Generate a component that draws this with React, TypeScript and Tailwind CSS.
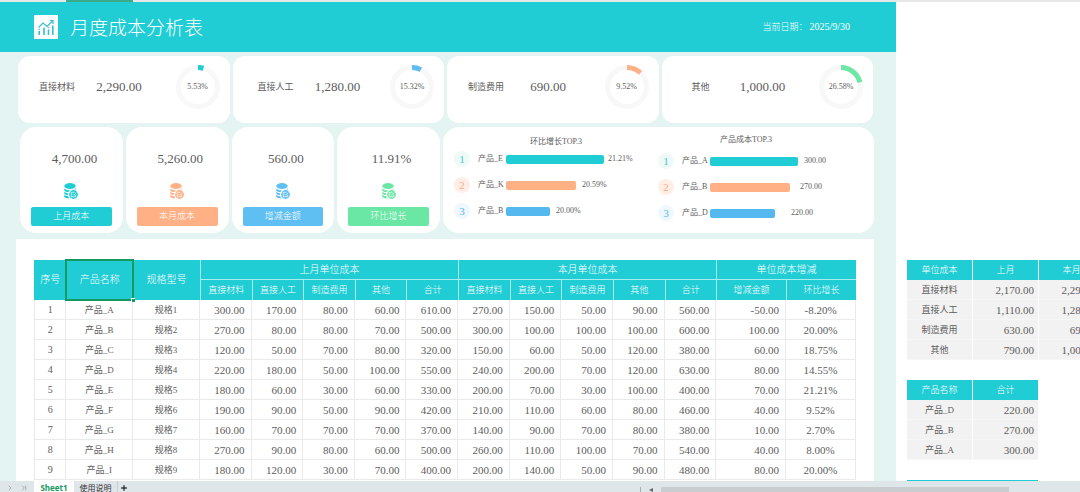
import type { ReactNode } from "react";
import { ChevronRight, ChevronLast, Plus } from "lucide-react";
import clsx from "clsx";

const shares = [
  { label: "直接材料", value: "2,290.00", percent: 5.53, stroke: "#20cdd5", pad: "" },
  { label: "直接人工", value: "1,280.00", percent: 15.32, stroke: "#5fbcf2", pad: "pl-1" },
  { label: "制造费用", value: "690.00", percent: 9.52, stroke: "#ffb085", pad: "" },
  { label: "其他", value: "1,000.00", percent: 26.58, stroke: "#6ee6a5", pad: "" },
];

// arc lengths of the gauges, as a share of the full ring
const arcs = [0.045, 0.075, 0.12, 0.21];

const totals = [
  { label: "上月成本", value: "4,700.00", text: "text-[#20cdd5]", bg: "bg-[#20cdd5]" },
  { label: "本月成本", value: "5,260.00", text: "text-[#ffb085]", bg: "bg-[#ffb085]" },
  { label: "增减金额", value: "560.00", text: "text-[#5fbff2]", bg: "bg-[#5fbff2]" },
  { label: "环比增长", value: "11.91%", text: "text-[#6ae6a5]", bg: "bg-[#6ae6a5]" },
];

type Bar = { name: string; value: string; size: string };

const growthTop: Bar[] = [
  { name: "产品_E", value: "21.21%", size: "w-[98px] mr-1" },
  { name: "产品_K", value: "20.59%", size: "w-[70px] mr-1.5" },
  { name: "产品_B", value: "20.00%", size: "w-[44px] mr-1.5" },
];

const costTop: Bar[] = [
  { name: "产品_A", value: "300.00", size: "w-[88px] mr-1.5" },
  { name: "产品_B", value: "270.00", size: "w-[80px] mr-2.5" },
  { name: "产品_D", value: "220.00", size: "w-[65px] mr-4" },
];

const rankStyles = [
  { badge: "bg-[#eef9f8] text-[#3ccfc4]", bar: "bg-[#20cdd5]" },
  { badge: "bg-[#ffeee6] text-[#ffa985]", bar: "bg-[#ffb085]" },
  { badge: "bg-[#eef8fe] text-[#5fb4f0]", bar: "bg-[#55b9f0]" },
];

const costHeads = ["直接材料", "直接人工", "制造费用", "其他", "合计"];

const products = [
  ["A", 300, 170, 80, 60, 610, 270, 150, 50, 90, 560, -50, "-8.20%"],
  ["B", 270, 80, 80, 70, 500, 300, 100, 100, 100, 600, 100, "20.00%"],
  ["C", 120, 50, 70, 80, 320, 150, 60, 50, 120, 380, 60, "18.75%"],
  ["D", 220, 180, 50, 100, 550, 240, 200, 70, 120, 630, 80, "14.55%"],
  ["E", 180, 60, 30, 60, 330, 200, 70, 30, 100, 400, 70, "21.21%"],
  ["F", 190, 90, 50, 90, 420, 210, 110, 60, 80, 460, 40, "9.52%"],
  ["G", 160, 70, 70, 70, 370, 140, 90, 70, 80, 380, 10, "2.70%"],
  ["H", 270, 90, 80, 60, 500, 260, 110, 100, 70, 540, 40, "8.00%"],
  ["I", 180, 120, 30, 70, 400, 200, 140, 50, 90, 480, 80, "20.00%"],
];

function CoinsIcon() {
  return (
    <svg viewBox="0 0 28 32" className="h-4 w-3.5" fill="currentColor" aria-hidden="true">
      <ellipse cx="12" cy="6" rx="11.5" ry="6" />
      <path d="M.5 11c2.500 2.600 6 3.500 11.500 3.500l-3 3.500C5 18 2 17 .5 15z" />
      <path d="M.5 17.500c2 1.700 4.500 2.300 7.500 2.500l-.5 4C4.500 24 2 23 .5 21z" />
      <path d="M.5 23.500c2 1.700 4.500 2.300 7.500 2.500 .5 2 1.500 3.500 3 5C6 31 2 29.500 .5 27.500z" />
      <path d="M23.500 10.500v3c-2.500-1.200-5-1.300-8-.3 3.500-.2 6-1 8-2.700z" />
      <circle cx="19" cy="23" r="8.800" />
      <path d="M21 18.500h-6.500v9h9v-4M17.500 22.500l2 2 5-5.500" fill="none" stroke="#fff" strokeWidth="1.400" />
    </svg>
  );
}

function ReportIcon() {
  return (
    <svg viewBox="0 0 24 24" className="size-6 bg-white" fill="none" stroke="#35bfd0" strokeWidth="1.200" aria-hidden="true">
      <path d="M4.500 12.500 9 8l4 3.500L18.500 6M16 5.500h3V9" />
      <path d="M5.200 20v-4M5.200 14.800v-1M10 20v-7.500M14.500 20v-5.500M14.500 13.300v-1M18.800 20v-9.500" strokeWidth="1.600" />
    </svg>
  );
}

function Gauge({ percent, arc, stroke }: { percent: number; arc: number; stroke: string }) {
  const r = 19.5;
  const length = 2 * Math.PI * r;
  return (
    <div className="mr-2.5 ml-auto grid size-11 place-items-center">
      <svg viewBox="0 0 44 44" className="col-start-1 row-start-1 size-11" fill="none" strokeWidth="5" aria-hidden="true">
        <circle cx="22" cy="22" r={r} stroke="#f8f8f9" />
        <circle cx="22" cy="22" r={r} stroke={stroke} strokeDasharray={`${length * arc} ${length}`} transform="rotate(-90 22 22)" />
      </svg>
      <span className="col-start-1 row-start-1 text-[8px] leading-3">{percent}%</span>
    </div>
  );
}

function TopChart({ title, bars, className, titleClass }: { title: string; bars: Bar[]; className: string; titleClass: string }) {
  return (
    <section className={className}>
      <h2 className={clsx("text-center text-[8px] leading-[10px]", titleClass)}>{title}</h2>
      <ol className="flex flex-col gap-1.5">
        {bars.map((bar, i) => (
          <li key={bar.name} className="flex h-5 items-center text-[8px] leading-3">
            <span className={clsx("mr-2 size-4 rounded-full text-center text-[11px] leading-4", rankStyles[i].badge)}>{i + 1}</span>
            <span className="w-7">{bar.name}</span>
            <span className={clsx("h-[9px] rounded-xs", bar.size, rankStyles[i].bar)} />
            <span>{bar.value}</span>
          </li>
        ))}
      </ol>
    </section>
  );
}

function Head({ children, className, ...span }: { children: ReactNode; className?: string; colSpan?: number; rowSpan?: number }) {
  return (
    <th {...span} className={clsx("h-5 bg-[#20cdd5] p-0 font-light text-white", className)}>
      {children}
    </th>
  );
}

function CostTable() {
  const line = "border-r border-b border-[#eaeaea]";
  const headLine = "border-l border-[#a9ecee]";
  return (
    <table className="w-full table-fixed border-separate border-spacing-0 text-center text-[9px] leading-3">
      <colgroup>
        <col className="w-8" />
        <col className="w-[66px]" />
        <col className="w-[66px]" />
        <col span={10} className="w-[51px]" />
        <col span={2} className="w-[69px]" />
      </colgroup>
      <thead>
        <tr className="text-[10px]">
          <Head rowSpan={2}>序号</Head>
          <Head rowSpan={2} className="relative">
            产品名称
            <span className="absolute -inset-px border-2 border-[#129a60]" />
            <span className="absolute -right-0.5 -bottom-0.5 size-1 border-t border-l border-white bg-[#129a60]" />
          </Head>
          <Head rowSpan={2}>规格型号</Head>
          <Head colSpan={5} className={clsx(headLine, "border-b")}>上月单位成本</Head>
          <Head colSpan={5} className={clsx(headLine, "border-b")}>本月单位成本</Head>
          <Head colSpan={2} className={clsx(headLine, "border-b")}>单位成本增减</Head>
        </tr>
        <tr>
          {[...costHeads, ...costHeads, "增减金额", "环比增长"].map((head, i) => (
            <Head key={i} className={headLine}>{head}</Head>
          ))}
        </tr>
      </thead>
      <tbody>
        {products.map(([id, ...cells], row) => (
          <tr key={id}>
            <td className={clsx("h-5 border-l p-0 text-[10px]", line)}>{row + 1}</td>
            <td className={clsx("p-0", line)}>产品_{id}</td>
            <td className={clsx("p-0", line)}>规格{row + 1}</td>
            {cells.map((cell, i) => (
              <td key={i} className={clsx("p-0 text-[11px]", line, typeof cell === "number" && "pr-1.5 text-right")}>
                {typeof cell === "number" ? cell.toFixed(2) : cell}
              </td>
            ))}
          </tr>
        ))}
      </tbody>
    </table>
  );
}

function SideTable({ heads, rows }: { heads: string[]; rows: string[][] }) {
  const cell = "border-r border-b border-r-white border-b-[#f6f6f6] bg-[#f2f2f2] p-0";
  return (
    <table className="w-max border-separate border-spacing-0 text-center text-[9px] leading-3">
      <thead>
        <tr>
          {heads.map((head) => (
            <Head key={head} className="min-w-[66px] border-r border-white">{head}</Head>
          ))}
        </tr>
      </thead>
      <tbody>
        {rows.map(([name, ...values]) => (
          <tr key={name}>
            <td className={clsx("h-5", cell)}>{name}</td>
            {values.map((value, i) => (
              <td key={i} className={clsx("text-[11px]", cell)}>
                <span className="block pr-1 text-right">{value}</span>
              </td>
            ))}
          </tr>
        ))}
      </tbody>
    </table>
  );
}

export default function App() {
  return (
    <div className="flex h-screen flex-col overflow-hidden bg-white font-['Liberation_Serif','Noto_Sans_CJK_SC',serif] text-[#5c5c5c]">
      <div className="flex h-0.5 shrink-0 bg-[#e6e8e8]">
        <span className="ml-[66px] w-[67px] bg-[#3aac8c]" />
      </div>

      <main className="grid min-h-0 flex-1 grid-cols-[896fr_184fr] overflow-hidden">
        <div className="min-w-0 bg-[#e4f4f2]">
          <header className="flex h-[50px] items-center bg-[#20cdd5] pr-[46px] pl-[34px] font-light text-white">
            <ReportIcon />
            <h1 className="ml-3 pt-1 text-[19px] leading-6">月度成本分析表</h1>
            <p className="ml-auto text-[9px] leading-3">
              当前日期：<time className="ml-0.5 text-[10px]">2025/9/30</time>
            </p>
          </header>

          <div className="grid grid-cols-4 gap-[3px] pt-1 pr-[23px] pl-[18px]">
            {shares.map((share, i) => (
              <section key={share.label} className={clsx("flex h-[67px] items-center rounded-xl bg-white pb-1.5", share.pad)}>
                <h2 className="w-[78px] text-center text-[9px] leading-3">{share.label}</h2>
                <p className="w-[46px] text-center text-[13px] leading-4">{share.value}</p>
                <Gauge percent={share.percent} arc={arcs[i]} stroke={share.stroke} />
              </section>
            ))}
          </div>

          <div className="grid grid-cols-[420fr_431fr] gap-[3px] pt-1 pr-[22px] pl-5">
            <div className="grid grid-cols-4 gap-[3px]">
              {totals.map((total) => (
                <section key={total.label} className="flex h-[106px] flex-col items-center rounded-2xl bg-white px-[11px] pt-6">
                  <p className="pl-1.5 text-[13px] leading-4">{total.value}</p>
                  <div className={clsx("mt-4", total.text)}>
                    <CoinsIcon />
                  </div>
                  <h2 className={clsx("mt-2 w-full rounded-xs text-center text-[9px] leading-[19px] font-light text-white", total.bg)}>{total.label}</h2>
                </section>
              ))}
            </div>
            <div className="flex rounded-2xl bg-white pl-[11px]">
              <TopChart title="环比增长TOP.3" bars={growthTop} className="flex-[204] pt-2.5" titleClass="mb-0.5" />
              <TopChart title="产品成本TOP.3" bars={costTop} className="flex-[216] pt-2" titleClass="mb-1.5 pr-10" />
            </div>
          </div>

          <div className="mt-1.5 mr-[22px] ml-4 min-h-full bg-white px-[18px] pt-[21px]">
            <CostTable />
          </div>
        </div>

        <aside className="flex min-w-0 flex-col items-start gap-5 overflow-hidden pt-[258px] pl-[11px]">
          <SideTable
            heads={["单位成本", "上月", "本月"]}
            rows={[
              ["直接材料", "2,170.00", "2,290.00"],
              ["直接人工", "1,110.00", "1,280.00"],
              ["制造费用", "630.00", "690.00"],
              ["其他", "790.00", "1,000.00"],
            ]}
          />
          <SideTable
            heads={["产品名称", "合计"]}
            rows={[
              ["产品_D", "220.00"],
              ["产品_B", "270.00"],
              ["产品_A", "300.00"],
            ]}
          />
          <div className="h-5 w-[131px] shrink-0 bg-[#20cdd5]" />
        </aside>
      </main>

      <footer className="flex h-[11px] shrink-0 items-end bg-[#dfe6ea] font-['Open_Sans','Noto_Sans_CJK_SC',sans-serif] text-[8px] leading-[9px] font-normal text-[#333]">
        <ChevronRight className="ml-1.5 size-2 shrink-0 text-[#8a9499]" />
        <ChevronLast className="ml-1.5 size-2 shrink-0 text-[#8a9499]" />
        <button className="ml-1.5 w-10 shrink-0 bg-white pt-0.5 text-center font-bold text-[#129a60]">Sheet1</button>
        <button className="w-11 shrink-0 border-r border-[#c8d0d4] pt-0.5 text-center">使用说明</button>
        <button className="ml-0.5 shrink-0" aria-label="添加工作表">
          <Plus className="size-2" strokeWidth={4} />
        </button>
        <div className="ml-auto flex w-[440px] items-center gap-2">
          <span className="h-[5px] w-px bg-[#a5adb2]" />
          <svg viewBox="0 0 4 4" className="size-1" fill="#666" aria-hidden="true">
            <path d="M4 0v4L0 2z" />
          </svg>
          <span className="h-[5px] w-[348px] bg-[#c9cdd0]" />
        </div>
      </footer>
    </div>
  );
}
